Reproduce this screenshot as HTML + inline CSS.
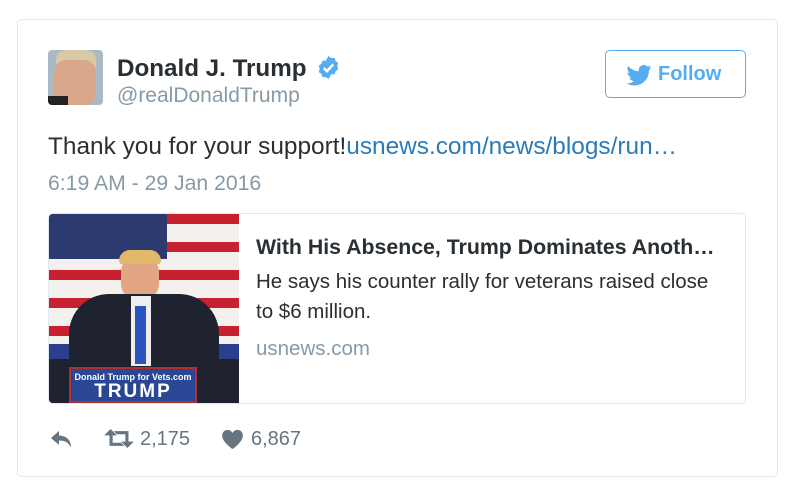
<!DOCTYPE html>
<html><head><meta charset="utf-8"><style>
*{margin:0;padding:0;box-sizing:border-box}
body{width:799px;height:494px;background:#fff;font-family:"Liberation Sans",Arial,sans-serif;position:relative;overflow:hidden}
.card{position:absolute;left:17px;top:19px;width:761px;height:458px;border:1px solid #e1e8ed;border-radius:5px}
.abs{position:absolute}
.name{left:117px;top:55px;font-size:24.2px;font-weight:bold;color:#292f33}
.handle{left:117px;top:84px;font-size:21px;color:#8899a6}
.follow{left:605px;top:50px;width:141px;height:48px;border:1px solid #55acee;border-radius:5px;color:#55acee;font-weight:bold;font-size:20px}
.text{left:48px;top:133px;font-size:24.4px;color:#292f33;white-space:nowrap}
.text a{color:#2b7bb9;text-decoration:none}
.time{left:48px;top:172px;font-size:21.2px;color:#8899a6}
.lc{left:48px;top:213px;width:698px;height:191px;border:1px solid #e1e8ed;border-radius:5px;overflow:hidden}
.img{left:0;top:0;width:190px;height:189px;background:repeating-linear-gradient(#c8202e 0 10px,#f4f0ee 10px 28px)}
.t1{left:207px;top:21px;font-size:21.3px;font-weight:bold;color:#292f33;white-space:nowrap}
.t2{left:207px;top:53px;font-size:20.5px;color:#292f33;line-height:30px;width:475px}
.t3{left:207px;top:123px;font-size:20.5px;color:#8899a6}
.act{top:428px;font-size:20px;color:#66757f}
</style></head><body>
<div class="card"></div>
<div class="abs" style="left:48px;top:50px;width:55px;height:55px;border-radius:4px;overflow:hidden;background:#a9bac4">
<div class="abs" style="left:8px;top:0;width:40px;height:18px;background:#d8c9a8;border-radius:10px 10px 0 0"></div>
<div class="abs" style="left:6px;top:10px;width:42px;height:45px;background:#d9a88a;border-radius:12px"></div>
<div class="abs" style="left:0;top:46px;width:20px;height:9px;background:#222"></div>
</div>
<div class="abs name">Donald J. Trump</div>
<svg class="abs" style="left:316px;top:55px" width="25" height="25" viewBox="0 0 24 24"><path fill="#55acee" d="M12 1l2.6 1.9 3.2-.1 1 3 2.6 1.9-1 3 1 3-2.6 1.9-1 3-3.2-.1L12 23l-2.6-1.9-3.2.1-1-3-2.6-1.9 1-3-1-3 2.6-1.9 1-3 3.2.1z"/><path d="M7.5 12.5l3 3 6-6.5" stroke="#fff" stroke-width="2.4" fill="none"/></svg>
<div class="abs handle">@realDonaldTrump</div>
<div class="abs follow"><svg class="abs" style="left:20px;top:14px" width="26" height="21" viewBox="0 0 24 20"><path fill="#55acee" d="M24 2.4a9.8 9.8 0 0 1-2.8.8A4.9 4.9 0 0 0 23.3.4a9.8 9.8 0 0 1-3.1 1.2A4.9 4.9 0 0 0 11.8 6 14 14 0 0 1 1.7.9a4.9 4.9 0 0 0 1.5 6.6A4.9 4.9 0 0 1 1 6.9a4.9 4.9 0 0 0 3.9 4.8 4.9 4.9 0 0 1-2.2.1 4.9 4.9 0 0 0 4.6 3.4A9.9 9.9 0 0 1 0 17.3 14 14 0 0 0 7.5 19.5c9.1 0 14-7.5 14-14v-.6A10 10 0 0 0 24 2.4z"/></svg><span class="abs" style="left:52px;top:12px">Follow</span></div>
<div class="abs text">Thank you for your support!<a>usnews.com/news/blogs/run…</a></div>
<div class="abs time">6:19 AM - 29 Jan 2016</div>
<div class="abs lc">
<div class="abs img">
<div class="abs" style="left:0;top:0;width:118px;height:45px;background:#2c3a70"></div>
<div class="abs" style="left:0;top:130px;width:190px;height:59px;background:#2b3f8f"></div>
<div class="abs" style="left:0;top:145px;width:190px;height:44px;background:#1f2330"></div>
<div class="abs" style="left:72px;top:40px;width:38px;height:46px;background:#e3a685;border-radius:18px 18px 16px 16px"></div>
<div class="abs" style="left:70px;top:36px;width:42px;height:14px;background:#e2b86a;border-radius:14px 14px 4px 4px"></div>
<div class="abs" style="left:20px;top:80px;width:150px;height:80px;background:#1f2330;border-radius:40px 40px 0 0"></div>
<div class="abs" style="left:82px;top:82px;width:20px;height:70px;background:#eee"></div>
<div class="abs" style="left:86px;top:92px;width:11px;height:58px;background:#2a55c0"></div>
<div class="abs" style="left:20px;top:153px;width:128px;height:36px;background:#2a4796;border:2px solid #b03030;color:#fff;text-align:center;font-weight:bold">
<div style="font-size:9px;margin-top:3px">Donald Trump for Vets.com</div><div style="font-size:19px;line-height:20px;letter-spacing:2px">TRUMP</div></div>
</div>
<div class="abs t1">With His Absence, Trump Dominates Anoth…</div>
<div class="abs t2">He says his counter rally for veterans raised close to $6 million.</div>
<div class="abs t3">usnews.com</div>
</div>
<svg class="abs" style="left:51px;top:431px" width="22" height="17" viewBox="0 0 22 17"><path fill="#66757f" d="M8 0L0 7l8 7V9.5c6 0 9 1.5 12 7 0-7-4-11.5-12-12z"/></svg>
<svg class="abs" style="left:104px;top:429px" width="30" height="19" viewBox="0 0 28 18"><path fill="#66757f" d="M6 0l6 6H8v7h8l3 3H5V6H0zM22 18l-6-6h4V5h-8L9 2h14v10h5z"/></svg>
<div class="abs act" style="left:140px">2,175</div>
<svg class="abs" style="left:222px;top:430px" width="21" height="19" viewBox="0 0 24 22"><path fill="#66757f" d="M12 22S0 14 0 6.5A6.3 6.3 0 0 1 12 3.5 6.3 6.3 0 0 1 24 6.5C24 14 12 22 12 22z"/></svg>
<div class="abs act" style="left:251px">6,867</div>
</body></html>
